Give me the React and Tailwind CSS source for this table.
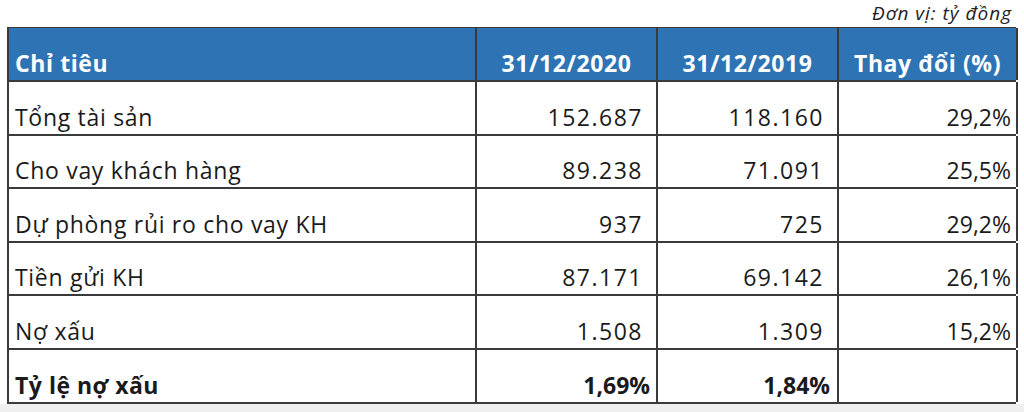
const rows = [
  { label: "Tổng tài sản", a: "152.687", b: "118.160", c: "29,2%" },
  { label: "Cho vay khách hàng", a: "89.238", b: "71.091", c: "25,5%" },
  { label: "Dự phòng rủi ro cho vay KH", a: "937", b: "725", c: "29,2%" },
  { label: "Tiền gửi KH", a: "87.171", b: "69.142", c: "26,1%" },
  { label: "Nợ xấu", a: "1.508", b: "1.309", c: "15,2%" },
];

const cols = "grid grid-cols-[468px_181px_181px_179px]";
const cell = "flex items-end border-r-2 border-[#3a3a3a] pb-[5px] leading-none";

export default function App() {
  return (
    <div
      className="w-[1024px] h-[412px] overflow-hidden bg-white text-[23px] text-[#1a1a1a]"
      style={{ fontFamily: '"Open Sans", "Noto Sans", sans-serif' }}
    >
      <div className="flex h-[27px] items-end justify-end pr-[12px] pb-[4px] text-[19px] italic leading-none tracking-[1px] text-[#222]">
        Đơn vị: tỷ đồng
      </div>

      <div className="ml-[7px] w-[1009px] border-l-2 border-t border-[#3a3a3a]">
        <div className={`${cols} h-[54px] bg-[#2e74b5] font-bold text-white border-b-2 border-[#3a3a3a] tracking-[0.6px]`}>
          <div className={`${cell} pl-[6px] pb-[4px]`}>Chỉ tiêu</div>
          <div className={`${cell} justify-center pb-[4px]`}>31/12/2020</div>
          <div className={`${cell} justify-center pb-[4px]`}>31/12/2019</div>
          <div className={`${cell} justify-center pb-[4px]`}>Thay đổi (%)</div>
        </div>

        {rows.map((r, i) => (
          <div
            key={r.label}
            className={`${cols} ${i % 2 === 1 ? "h-[53px]" : "h-[54px]"} border-b-2 border-[#3a3a3a]`}
          >
            <div className={`${cell} pl-[6px] tracking-[0.7px]`}>{r.label}</div>
            <div className={`${cell} justify-end pr-[13px] tracking-[1.5px]`}>{r.a}</div>
            <div className={`${cell} justify-end pr-[13px] tracking-[1.5px]`}>{r.b}</div>
            <div className={`${cell} justify-end pr-[5px]`}>{r.c}</div>
          </div>
        ))}

        <div className={`${cols} h-[54px] font-bold border-b-2 border-[#3a3a3a]`}>
          <div className={`${cell} pl-[6px] tracking-[0.5px]`}>Tỷ lệ nợ xấu</div>
          <div className={`${cell} justify-end pr-[6px]`}>1,69%</div>
          <div className={`${cell} justify-end pr-[7px]`}>1,84%</div>
          <div className={cell}></div>
        </div>
      </div>

      <div className="h-[20px] bg-[#efefef]" />
    </div>
  );
}
